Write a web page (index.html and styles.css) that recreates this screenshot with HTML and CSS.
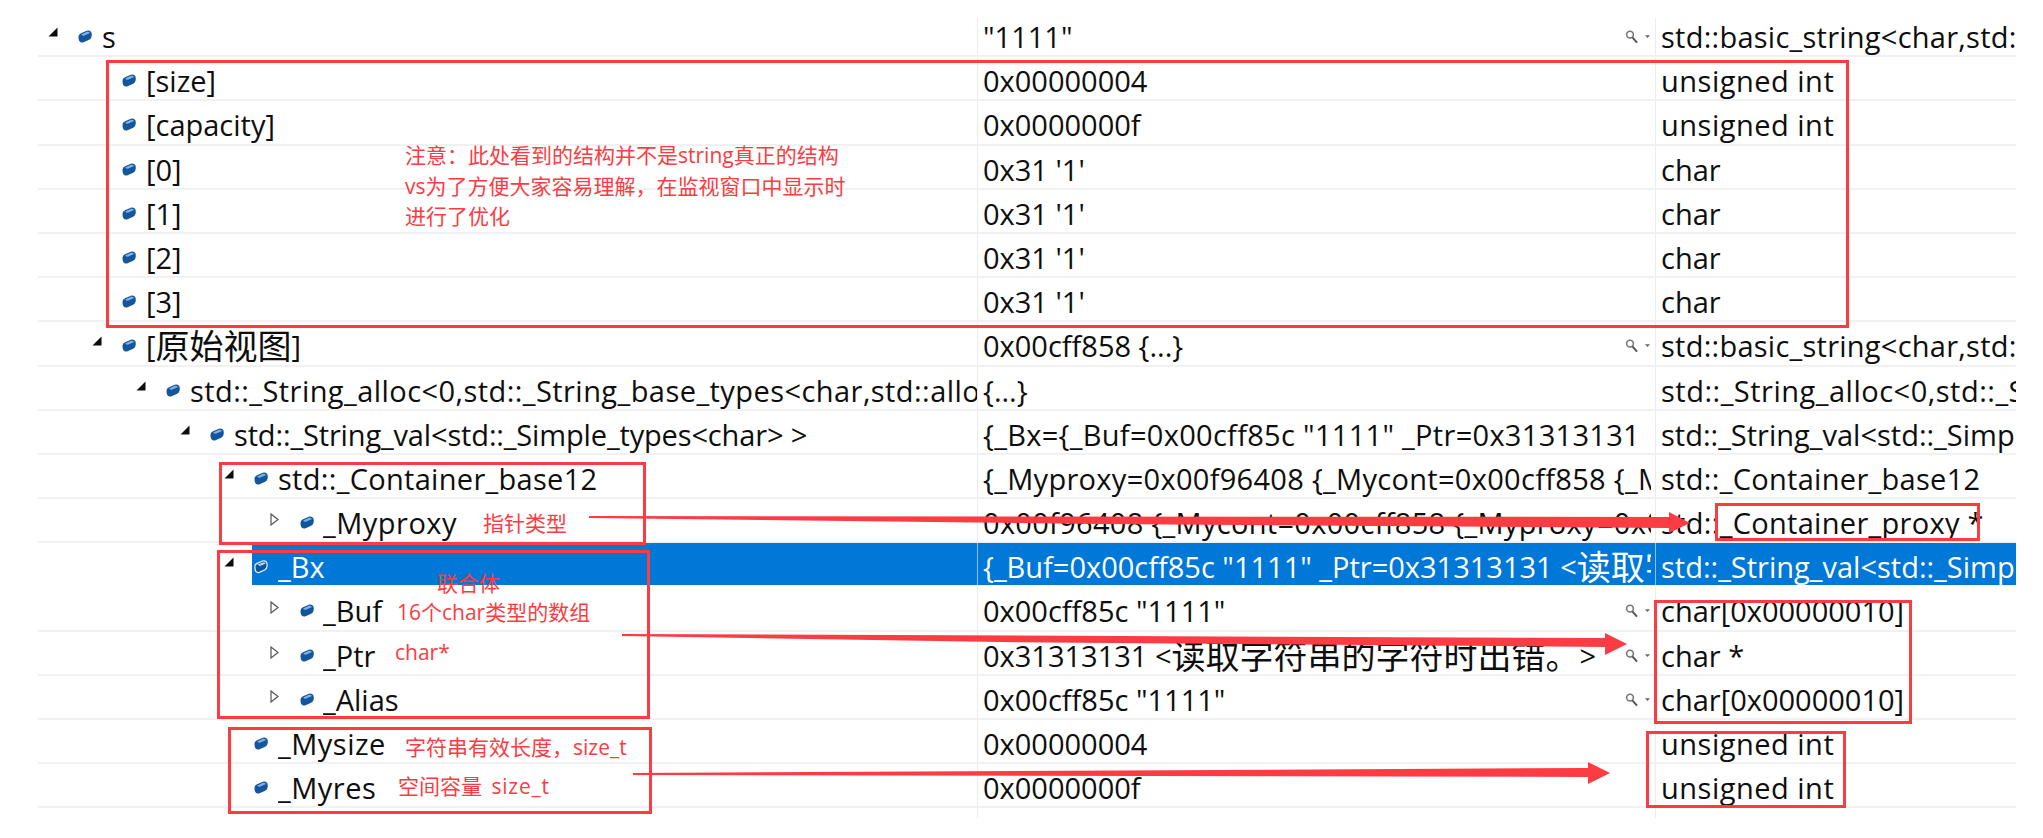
FILE: index.html
```html
<!DOCTYPE html>
<html lang="zh">
<head>
<meta charset="utf-8">
<title>Watch window</title>
<link rel="stylesheet" href="styles.css">
</head>
<body>
<svg class="defs" aria-hidden="true">
  <symbol id="cube" viewBox="0 0 14 13">
    <path fill="#14569e" d="M.6 6Q.8 4.2 3 3.2L8.8 .7Q11.2 0 13 1.8 14.2 3.6 13.6 6.4 13.2 8.6 11.2 9.8L5.6 12.2Q3 13 1.4 11.2.2 9 .6 6Z"/>
    <path fill="#7fb2e2" d="M3.2 4.4 9 1.8Q10.8 1.4 12 3L6.4 5.6Q4.2 5.9 3.2 4.4Z"/>
  </symbol>
  <symbol id="cube-sel" viewBox="0 0 14 14">
    <path fill="#0f56a0" stroke="#e8f2fb" stroke-width="1.2" d="M1 6Q1 4.4 3 3.4L8.6 1Q11 .6 12.4 2 13.4 3.6 13 6.4 12.8 8.6 11 9.8L5.4 12.4Q3.2 13 1.8 11.4.7 9.2 1 6Z"/>
    <path fill="#bcd9f2" d="M3.6 4.6 9 2.4Q10.6 2.2 11.6 3.4L6.4 5.8Q4.6 6 3.6 4.6Z"/>
  </symbol>
  <symbol id="open" viewBox="0 0 10 10"><path fill="#0c0c0c" d="M9.5 .5V9.5H.5Z"/></symbol>
  <symbol id="closed" viewBox="0 0 9 13"><path fill="#fff" stroke="#555" stroke-width="1.2" d="M1 1 8 6.5 1 12Z"/></symbol>
  <symbol id="viz" viewBox="0 0 26 14">
    <circle cx="5" cy="4.6" r="3.4" fill="#fff" stroke="#777" stroke-width="1.6"/>
    <path stroke="#555" stroke-width="2" d="M7.4 7.4 12 12.6"/>
    <path fill="#666" d="M20 5.2h5l-2.5 2.8Z"/>
  </symbol>
</svg>
<main class="watch">
  <div class="row top">
    <div class="cell name l0"><svg class="exp"><use href="#open"/></svg><svg class="cube"><use href="#cube"/></svg><span class="txt">s</span></div>
    <div class="cell value"><span class="txt">"1111"</span><svg class="viz"><use href="#viz"/></svg></div>
    <div class="cell type"><span class="txt ws1">std::basic_string&lt;char,std::allocator&lt;char&gt; &gt;</span></div>
  </div>
  <div class="row">
    <div class="cell name l1"><span class="gap"></span><svg class="cube"><use href="#cube"/></svg><span class="txt">[size]</span></div>
    <div class="cell value"><span class="txt">0x00000004</span></div>
    <div class="cell type"><span class="txt ws2">unsigned int</span></div>
  </div>
  <div class="row">
    <div class="cell name l1"><span class="gap"></span><svg class="cube"><use href="#cube"/></svg><span class="txt">[capacity]</span></div>
    <div class="cell value"><span class="txt">0x0000000f</span></div>
    <div class="cell type"><span class="txt ws2">unsigned int</span></div>
  </div>
  <div class="row">
    <div class="cell name l1"><span class="gap"></span><svg class="cube"><use href="#cube"/></svg><span class="txt">[0]</span></div>
    <div class="cell value"><span class="txt">0x31 '1'</span></div>
    <div class="cell type"><span class="txt">char</span></div>
  </div>
  <div class="row">
    <div class="cell name l1"><span class="gap"></span><svg class="cube"><use href="#cube"/></svg><span class="txt">[1]</span></div>
    <div class="cell value"><span class="txt">0x31 '1'</span></div>
    <div class="cell type"><span class="txt">char</span></div>
  </div>
  <div class="row">
    <div class="cell name l1"><span class="gap"></span><svg class="cube"><use href="#cube"/></svg><span class="txt">[2]</span></div>
    <div class="cell value"><span class="txt">0x31 '1'</span></div>
    <div class="cell type"><span class="txt">char</span></div>
  </div>
  <div class="row">
    <div class="cell name l1"><span class="gap"></span><svg class="cube"><use href="#cube"/></svg><span class="txt">[3]</span></div>
    <div class="cell value"><span class="txt">0x31 '1'</span></div>
    <div class="cell type"><span class="txt">char</span></div>
  </div>
  <div class="row">
    <div class="cell name l1"><svg class="exp"><use href="#open"/></svg><svg class="cube"><use href="#cube"/></svg><span class="txt">[<span class="cjk">原始视图</span>]</span></div>
    <div class="cell value"><span class="txt">0x00cff858 {...}</span><svg class="viz"><use href="#viz"/></svg></div>
    <div class="cell type"><span class="txt ws1">std::basic_string&lt;char,std::allocator&lt;char&gt; &gt;</span></div>
  </div>
  <div class="row">
    <div class="cell name l2"><svg class="exp"><use href="#open"/></svg><svg class="cube"><use href="#cube"/></svg><span class="txt ws3">std::_String_alloc&lt;0,std::_String_base_types&lt;char,std::allocator&lt;char&gt; &gt; &gt;</span></div>
    <div class="cell value"><span class="txt">{...}</span></div>
    <div class="cell type"><span class="txt ws2">std::_String_alloc&lt;0,std::_String_base_types&lt;char&gt; &gt;</span></div>
  </div>
  <div class="row">
    <div class="cell name l3"><svg class="exp"><use href="#open"/></svg><svg class="cube"><use href="#cube"/></svg><span class="txt ns">std::_String_val&lt;std::_Simple_types&lt;char&gt; &gt;</span></div>
    <div class="cell value"><span class="txt ws">{_Bx={_Buf=0x00cff85c "1111" _Ptr=0x31313131</span></div>
    <div class="cell type"><span class="txt">std::_String_val&lt;std::_Simple_types&lt;char&gt; &gt;</span></div>
  </div>
  <div class="row">
    <div class="cell name l4"><svg class="exp"><use href="#open"/></svg><svg class="cube"><use href="#cube"/></svg><span class="txt ws">std::_Container_base12</span></div>
    <div class="cell value"><span class="txt ws">{_Myproxy=0x00f96408 {_Mycont=0x00cff858 {_Myproxy=0x00f96408 }</span></div>
    <div class="cell type"><span class="txt ws">std::_Container_base12</span></div>
  </div>
  <div class="row">
    <div class="cell name l5"><svg class="exp closed"><use href="#closed"/></svg><svg class="cube"><use href="#cube"/></svg><span class="txt ws2">_Myproxy</span></div>
    <div class="cell value"><span class="txt ws">0x00f96408 {_Mycont=0x00cff858 {_Myproxy=0x00f96408 }</span></div>
    <div class="cell type"><span class="txt ws">std::_Container_proxy *</span></div>
  </div>
  <div class="row sel">
    <div class="cell name l4"><svg class="exp"><use href="#open"/></svg><svg class="cube"><use href="#cube-sel"/></svg><span class="txt">_Bx</span></div>
    <div class="cell value"><span class="txt">{_Buf=0x00cff85c "1111" _Ptr=0x31313131 &lt;<span class="cjk">读取字符串的字符时出错。</span>&gt; }</span></div>
    <div class="cell type"><span class="txt">std::_String_val&lt;std::_Simple_types&lt;char&gt; &gt;</span></div>
  </div>
  <div class="row">
    <div class="cell name l5"><svg class="exp closed"><use href="#closed"/></svg><svg class="cube"><use href="#cube"/></svg><span class="txt">_Buf</span></div>
    <div class="cell value"><span class="txt">0x00cff85c "1111"</span><svg class="viz"><use href="#viz"/></svg></div>
    <div class="cell type"><span class="txt">char[0x00000010]</span></div>
  </div>
  <div class="row">
    <div class="cell name l5"><svg class="exp closed"><use href="#closed"/></svg><svg class="cube"><use href="#cube"/></svg><span class="txt">_Ptr</span></div>
    <div class="cell value"><span class="txt">0x31313131 &lt;<span class="cjk">读取字符串的字符时出错。</span>&gt;</span><svg class="viz"><use href="#viz"/></svg></div>
    <div class="cell type"><span class="txt">char *</span></div>
  </div>
  <div class="row">
    <div class="cell name l5"><svg class="exp closed"><use href="#closed"/></svg><svg class="cube"><use href="#cube"/></svg><span class="txt">_Alias</span></div>
    <div class="cell value"><span class="txt">0x00cff85c "1111"</span><svg class="viz"><use href="#viz"/></svg></div>
    <div class="cell type"><span class="txt">char[0x00000010]</span></div>
  </div>
  <div class="row">
    <div class="cell name l4"><span class="gap"></span><svg class="cube"><use href="#cube"/></svg><span class="txt ws2">_Mysize</span></div>
    <div class="cell value"><span class="txt">0x00000004</span></div>
    <div class="cell type"><span class="txt ws2">unsigned int</span></div>
  </div>
  <div class="row">
    <div class="cell name l4"><span class="gap"></span><svg class="cube"><use href="#cube"/></svg><span class="txt ws2">_Myres</span></div>
    <div class="cell value"><span class="txt">0x0000000f</span></div>
    <div class="cell type"><span class="txt ws2">unsigned int</span></div>
  </div>
  <div class="row tail">
    <div class="cell name"></div>
    <div class="cell value"></div>
    <div class="cell type"></div>
  </div>
</main>

<div class="box box-a"></div>
<div class="box box-b"></div>
<div class="box box-c"></div>
<div class="box box-d"></div>
<div class="box box-e"></div>
<div class="box box-f"></div>
<div class="box box-g"></div>

<svg class="arrows" viewBox="0 0 2043 838" aria-hidden="true">
  <polygon points="589,516 1669,517 1669,512 1690,523 1669,533 1669,528 1100,524 589,518"/>
  <polygon points="622,634 1605,638 1605,633 1627,644 1605,655 1605,647 1000,642 622,636"/>
  <polygon points="633,773 1588,768 1588,762 1610,773 1588,784 1588,777 633,775"/>
</svg>

<p class="note note-main">注意：此处看到的结构并不是<b>string</b>真正的结构<br><b>vs</b>为了方便大家容易理解，在监视窗口中显示时<br>进行了优化</p>
<p class="note note-ptr">指针类型</p>
<p class="note note-union">联合体</p>
<p class="note note-buf"><b>16</b>个<b>char</b>类型的数组</p>
<p class="note note-char"><b>char*</b></p>
<p class="note note-size">字符串有效长度，<b>size_t</b></p>
<p class="note note-res">空间容量&nbsp;&nbsp;<b class="wide">size_t</b></p>
</body>
</html>
```

FILE: styles.css
```css
* { box-sizing: border-box; }

html, body {
  margin: 0;
  height: 100%;
  background: #fff;
}

body {
  position: relative;
  width: 2043px;
  height: 838px;
  overflow: hidden;
  font-family: "Open Sans", "Noto Sans CJK SC", sans-serif;
  color: #0e0e0e;
}

.defs { position: absolute; width: 0; height: 0; }

.watch {
  padding: 13px 27px 0 38px;
}

.row {
  display: grid;
  grid-template-columns: 939px 678px 361px;
  height: 44.2px;
  border-bottom: 2px solid #f1f1f1;
}

.cell {
  display: flex;
  align-items: flex-start;
  min-width: 0;
  overflow: hidden;
  white-space: nowrap;
  font-size: 29px;
  line-height: 47.5px;
}

.value, .type { border-left: 1px solid #ececec; }
.value { padding: 0 4px 0 5px; }
.type { padding-left: 5px; }

.top .value, .top .type {
  border-left-color: transparent;
  background: linear-gradient(#ececec, #ececec) no-repeat 0 5px / 1px 100%;
  background-origin: border-box;
}

.tail {
  height: 9.3px;
  border-bottom: 0;
}

.txt { flex: 1 1 auto; min-width: 0; overflow: hidden; }
.ws { letter-spacing: .3px; }
.ws1 { letter-spacing: .25px; }
.ws2 { letter-spacing: .5px; }
.ws3 { letter-spacing: .44px; }
.ns { letter-spacing: -.15px; }
.cjk { font-size: 34px; line-height: 1; vertical-align: -2px; }

.l0 { padding-left: 10px; }
.l1 { padding-left: 54px; }
.l2 { padding-left: 98px; }
.l3 { padding-left: 142px; }
.l4 { padding-left: 186px; }
.l5 { padding-left: 232px; }

.exp, .gap {
  flex: none;
  width: 10px;
  height: 10px;
  margin: 14px 20px 0 0;
}
.exp.closed {
  width: 9px;
  height: 13px;
  margin: 14px 21px 0 0;
}

.cube {
  flex: none;
  width: 14px;
  height: 13px;
  margin: 17px 10px 0 0;
}
.l5 .cube { margin-right: 9px; }

.viz {
  flex: none;
  width: 26px;
  height: 14px;
  margin-top: 17px;
}

.sel { border-bottom-color: transparent; }
.sel .cell { background: #0078d7; color: #fff; }
.sel .name {
  background: linear-gradient(#0078d7, #0078d7) no-repeat 214px 0;
  color: #fff;
}
.sel .value, .sel .type { border-left-color: #8cc2ee; }
.sel .cube { height: 14px; }

/* annotation layer drawn over the screenshot */
.box {
  position: absolute;
  border: 3px solid #fb3c42;
}
.box-a { left: 106px; top: 60px; width: 1743px; height: 268px; }
.box-b { left: 219px; top: 462px; width: 427px; height: 83px; }
.box-c { left: 217px; top: 550px; width: 433px; height: 169px; }
.box-d { left: 228px; top: 727px; width: 424px; height: 87px; }
.box-e { left: 1715px; top: 503px; width: 265px; height: 38px; }
.box-f { left: 1654px; top: 600px; width: 258px; height: 124px; }
.box-g { left: 1646px; top: 731px; width: 200px; height: 77px; }

.arrows {
  position: absolute;
  left: 0;
  top: 0;
  width: 2043px;
  height: 838px;
  fill: #fb3c42;
}

.note {
  position: absolute;
  margin: 0;
  white-space: nowrap;
  color: #fb3c42;
  font-family: "Noto Sans CJK SC", sans-serif;
  font-size: 21px;
  line-height: 29.5px;
}
.note b { font-weight: 500; font-family: "Open Sans", "Noto Sans CJK SC", sans-serif; }
.note b.wide { letter-spacing: .8px; }

.note-main { left: 405px; top: 140px; }
.note-ptr { left: 483px; top: 508px; }
.note-union { left: 437px; top: 568px; }
.note-buf { left: 397px; top: 597px; }
.note-char { left: 395px; top: 637px; }
.note-size { left: 405px; top: 732px; }
.note-res { left: 398px; top: 771px; }
```
